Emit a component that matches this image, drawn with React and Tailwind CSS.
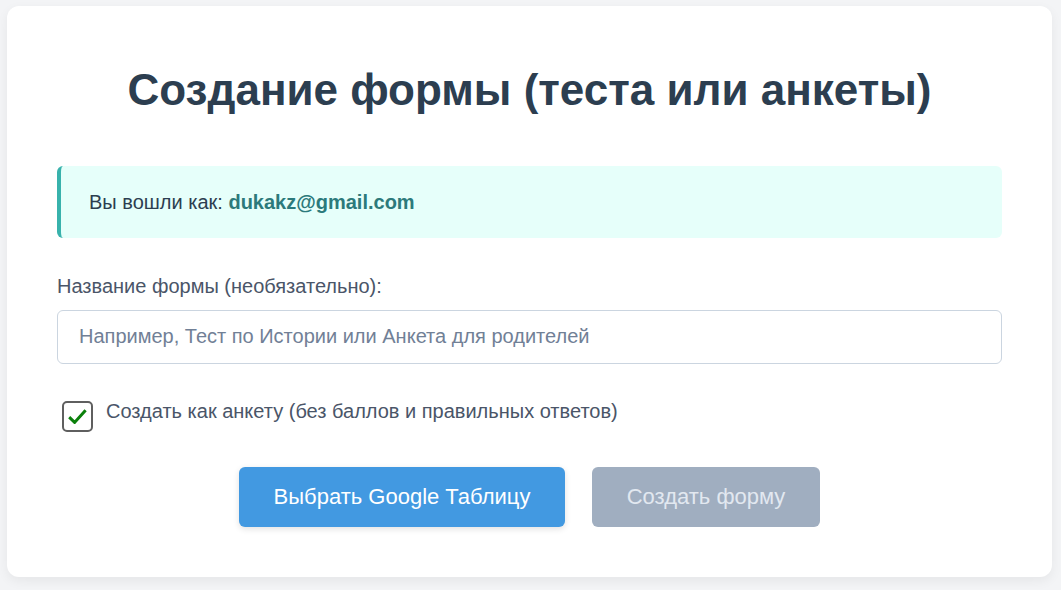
export default function App() {
  return (
    <div className="min-h-screen bg-[#f3f4f6] pl-[7px] pr-[9px] pt-[6px] pb-[13px] font-['Liberation_Sans',Arial,sans-serif]">
      <div className="rounded-xl bg-white px-[50px] pt-[58px] pb-[50px] shadow-[0_4px_12px_rgba(0,0,0,0.06)]">
        <h1 className="text-center text-[44px] font-bold leading-[1.2] text-[#2c3e50]">
          Создание формы (теста или анкеты)
        </h1>

        <div className="mt-[49px] flex h-[72px] items-center rounded-md border-l-4 border-[#38b2ac] bg-[#e6fffa] px-7 text-[20px] text-[#2c3e50]">
          <span>
            Вы вошли как:{" "}
            <strong className="font-bold text-[#2c7a7b]">dukakz@gmail.com</strong>
          </span>
        </div>

        <label className="mt-[36px] block text-[20px] leading-6 text-[#4a5568]">
          Название формы (необязательно):
        </label>
        <input
          type="text"
          placeholder="Например, Тест по Истории или Анкета для родителей"
          className="mt-[12px] block h-[54px] w-full rounded-md border border-[#cbd5e0] px-[21px] text-[20px] text-[#2d3748] outline-none placeholder:text-[#718096]"
        />

        <label className="mt-[37px] flex items-start gap-[13px] pl-[5px]">
          <span className="flex h-[31px] w-[31px] shrink-0 items-center justify-center rounded-[5px] border-2 border-[#5f5f5f] bg-white">
            <svg width="19" height="15" viewBox="0 0 19 15" className="mt-[1px]">
              <path
                d="M1.2 8.2 L6.6 13.4 L17.6 1.2"
                fill="none"
                stroke="#0b800b"
                strokeWidth="3"
                strokeLinejoin="miter"
              />
            </svg>
          </span>
          <span className="text-[20px] leading-5 text-[#4a5568]">
            Создать как анкету (без баллов и правильных ответов)
          </span>
        </label>

        <div className="mt-[35px] flex justify-center gap-[27px]">
          <button className="h-[60px] w-[326px] rounded-md bg-[#4299e1] text-[22px] text-white shadow-[0_2px_6px_rgba(0,0,0,0.12)]">
            Выбрать Google Таблицу
          </button>
          <button
            disabled
            className="h-[60px] w-[228px] rounded-md bg-[#a0aec0] text-[22px] text-[#e2e8f0]"
          >
            Создать форму
          </button>
        </div>
      </div>
    </div>
  );
}
